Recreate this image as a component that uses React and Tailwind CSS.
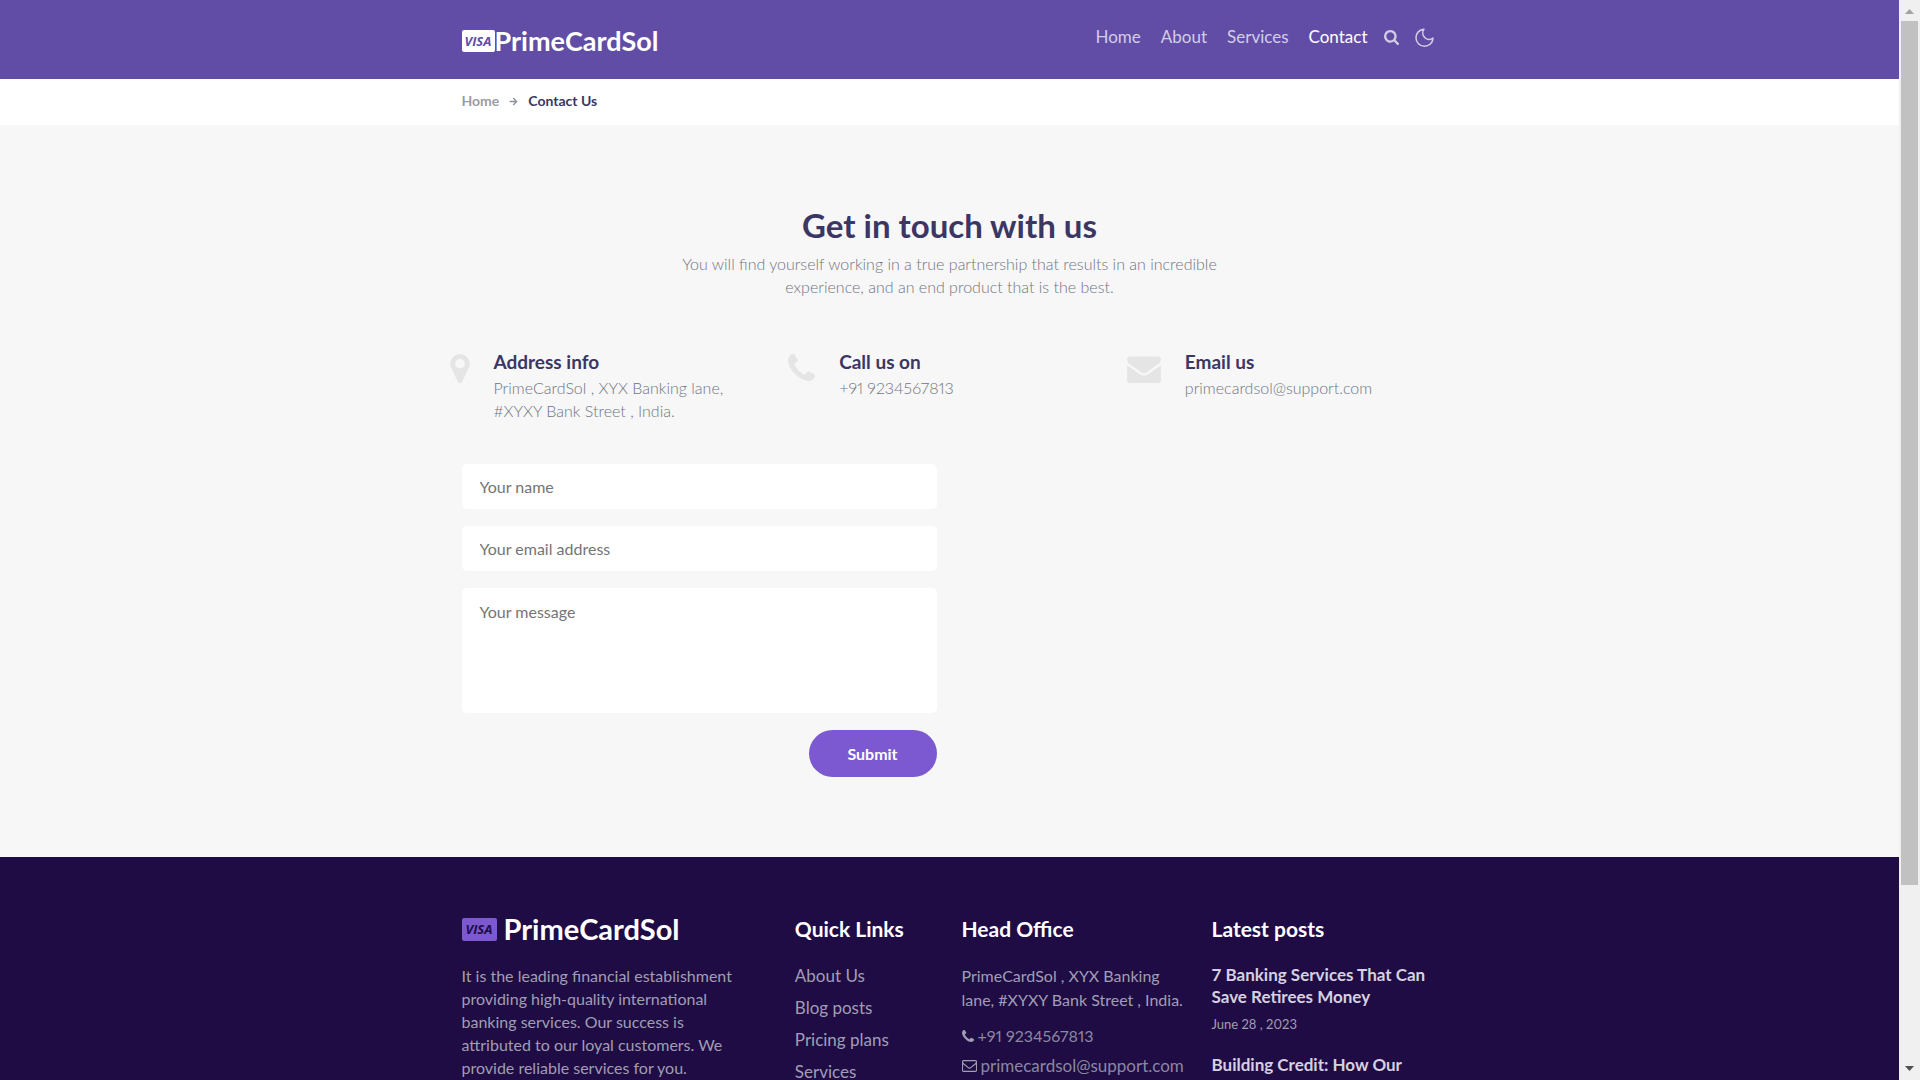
import { FaArrowRight } from "react-icons/fa";

function Glyph({ d, box, className }) {
  return (
    <svg viewBox={box} className={className} fill="currentColor" aria-hidden="true">
      <path d={d} />
    </svg>
  );
}

const PHONE =
  "M1408 1240q0 27-10 70.5t-21 68.5q-21 50-122 106-94 51-186 51-27 0-53-3.5t-57.5-12.5-47-14.5-55.5-20.5-49-18q-98-35-175-83-127-79-264-216t-216-264q-48-77-83-175-3-9-18-49t-20.5-55.5-14.5-47-12.5-57.5-3.5-53q0-92 51-186 56-101 106-122 25-11 68.5-21t70.5-10q14 0 21 3 18 6 53 76 11 19 30 54t35 63.5 31 53.5q3 4 17.5 25t21.5 35.5 7 28.5q0 20-28.5 50t-62 55-62 53-28.5 46q0 9 5 22.5t8.5 20.5 14 24 11.5 19q76 137 174 235t235 174q2 1 19 11.5t24 14 20.5 8.5 22.5 5q18 0 46-28.5t53-62 55-62 50-28.5q14 0 28.5 7t35.5 21.5 25 17.5q25 15 53.5 31t63.5 35 54 30q70 35 76 53 3 7 3 21z";
const PIN =
  "M768 640q0-106-75-181t-181-75-181 75-75 181 75 181 181 75 181-75 75-181zm256 0q0 109-33 179l-364 774q-16 33-47.5 52t-67.5 19-67.5-19-46.5-52l-365-774q-33-70-33-179 0-212 150-362t362-150 362 150 150 362z";
const ENVELOPE =
  "M1792 710v794q0 66-47 113t-113 47h-1472q-66 0-113-47t-47-113v-794q44 49 101 87 362 246 497 345 57 42 92.5 65.5t94.5 48 110 24.5h2q51 0 110-24.5t94.5-48 92.5-65.5q170-123 498-345 57-39 100-87zm0-294q0 79-49 151t-122 123q-376 261-468 325-10 7-42.5 31t-54 38.5-52 32.5-57.5 27-50 9h-2q-23 0-50-9t-57.5-27-52-32.5-54-38.5-42.5-31q-91-64-262-182.5t-205-142.5q-62-42-117-115.5t-55-136.5q0-78 41.5-130t118.5-52h1472q65 0 112.5 47t47.5 113z";
const ENVELOPE_OPEN =
  "M1664 1504v-768q-32 36-69 66-268 206-426 338-51 43-83 67t-86.5 48.5-102.5 24.5h-2q-48 0-102.5-24.5t-86.5-48.5-83-67q-158-132-426-338-37-30-69-66v768q0 13 9.5 22.5t22.5 9.5h1472q13 0 22.5-9.5t9.5-22.5zm0-1051v-24.5l-.5-13-3-12.5-5.5-9-9-7.5-14-2.5h-1472q-13 0-22.5 9.5t-9.5 22.5q0 168 147 284 193 152 401 317 6 5 35 29.5t46 37.5 44.5 31.5 50.5 27.5 43 9h2q20 0 43-9t50.5-27.5 44.5-31.5 46-37.5 35-29.5q208-165 401-317 54-43 100.5-115.5t46.5-131.5zm128-37v1088q0 66-47 113t-113 47h-1472q-66 0-113-47t-47-113v-1088q0-66 47-113t113-47h1472q66 0 113 47t47 113z";
const SEARCH =
  "M1216 832q0-185-131.5-316.5t-316.5-131.5-316.5 131.5-131.5 316.5 131.5 316.5 316.5 131.5 316.5-131.5 131.5-316.5zm512 832q0 52-38 90t-90 38q-54 0-90-38l-343-342q-179 124-399 124-143 0-273.5-55.5t-225-150-150-225-55.5-273.5 55.5-273.5 150-225 225-150 273.5-55.5 273.5 55.5 225 150 150 225 55.5 273.5q0 220-124 399l343 343q37 37 37 90z";

const NAV = ["Home", "About", "Services"];
const LINKS = ["About Us", "Blog posts", "Pricing plans", "Services"];

function VisaBadge({ className }) {
  return (
    <span
      className={
        "flex items-center justify-center rounded-[2px] font-['Open_Sans',sans-serif] text-[13px] leading-none font-bold italic " +
        className
      }
    >
      VISA
    </span>
  );
}

function Header() {
  return (
    <header className="h-[79px] shrink-0 bg-[#624da6]">
      <div className="mx-auto flex max-w-[1000px] items-start justify-between px-3">
        <a href="#home" className="mt-6 flex items-center text-[27px] leading-[34px] font-bold text-white">
          <VisaBadge className="h-[22px] w-[33px] bg-white text-[#624da6]" />
          PrimeCardSol
        </a>
        <nav className="mt-6 flex items-center gap-5 text-[17px] leading-[26px] text-[#d3cde6]">
          {NAV.map((n) => (
            <a key={n} href={"#" + n.toLowerCase()}>{n}</a>
          ))}
          <a href="#contact" className="text-white">Contact</a>
          <button type="button" aria-label="Search" className="-ml-1">
            <Glyph d={SEARCH} box="64 128 1664 1664" className="size-[15px]" />
          </button>
          <button type="button" aria-label="Dark mode" className="mr-1 -ml-1">
            <svg viewBox="2 2 20 20" className="size-[19px]" fill="none" stroke="currentColor" strokeWidth="1.600" strokeLinejoin="round">
              <path d="M11.500 3.200a6.800 6.800 0 0 0 9.500 9.500A9 9 0 1 1 11.500 3.200Z" />
            </svg>
          </button>
        </nav>
      </div>
    </header>
  );
}

function Info({ icon, title, children }) {
  return (
    <div className="flex items-start gap-6">
      <span className="mt-1.5 text-[#e5e5e5]">{icon}</span>
      <div>
        <h2 className="text-[19px] leading-7 font-bold text-[#3b3663]">{title}</h2>
        <p className="text-base leading-[23px] font-light whitespace-nowrap text-[#6f7482] proportional-nums">{children}</p>
      </div>
    </div>
  );
}

function ContactForm() {
  const field = "block w-full rounded-[5px] bg-white px-[18px] text-base placeholder:text-[#757575]";
  return (
    <form className="mt-[42px] flex w-full max-w-[475px] flex-col gap-[17px]">
      <input type="text" aria-label="Your name" placeholder="Your name" className={field + " h-[45px]"} />
      <input type="email" aria-label="Your email address" placeholder="Your email address" className={field + " h-[45px]"} />
      <textarea aria-label="Your message" placeholder="Your message" className={field + " h-[125px] resize-none py-3"} />
      <button type="submit" className="h-[47px] w-32 self-end rounded-full bg-[#7c59d0] text-base font-bold text-white">
        Submit
      </button>
    </form>
  );
}

function Post({ title, date }) {
  return (
    <article>
      <h3 className="text-[17px] leading-[22px] font-bold text-[#d6d0e0]">
        <a href="#post">{title}</a>
      </h3>
      {date && <p className="mt-1.5 text-[13px] leading-5 proportional-nums">{date}</p>}
    </article>
  );
}

function Footer() {
  const heading = "text-[21px] leading-7 font-bold text-white";
  return (
    <footer className="flex-1 bg-[#1f0c44] pt-[58px] text-base text-[#a09eb4]">
      <div className="mx-auto grid max-w-[1000px] grid-cols-12">
        <div className="col-span-4 px-3">
          <a href="#home" className="flex items-center gap-[7px] text-[29px] leading-7 font-bold text-white">
            <VisaBadge className="h-[23px] w-[35px] bg-[#7c59d0] text-[#1f0c44]" />
            PrimeCardSol
          </a>
          <p className="mt-[21px] w-[276px] leading-[23px]">
            It is the leading financial establishment providing high-quality international banking services. Our success is
            attributed to our loyal customers. We provide reliable services for you.
          </p>
        </div>
        <div className="col-span-2 px-3">
          <h2 className={heading + " whitespace-nowrap"}>Quick Links</h2>
          <ul className="mt-[21px] flex flex-col gap-2 text-[17px] leading-6">
            {LINKS.map((l) => (
              <li key={l}><a href="#link">{l}</a></li>
            ))}
          </ul>
        </div>
        <div className="col-span-3 px-3">
          <h2 className={heading}>Head Office</h2>
          <p className="mt-[21px] leading-6 whitespace-nowrap">
            PrimeCardSol , XYX Banking
            <br />
            lane, #XYXY Bank Street , India.
          </p>
          <a href="tel:+919234567813" className="mt-3 flex items-center gap-1 leading-6 text-[#8b87a2] proportional-nums">
            <Glyph d={PHONE} box="0 128 1408 1408" className="size-3 text-[#a09eb4]" />
            +91 9234567813
          </a>
          <a href="mailto:primecardsol@support.com" className="mt-1.5 flex items-center gap-1 text-[17px] leading-6 text-[#8b87a2]">
            <Glyph d={ENVELOPE_OPEN} box="0 256 1792 1408" className="h-3 w-[15px] text-[#a09eb4]" />
            primecardsol@support.com
          </a>
        </div>
        <div className="col-span-3 px-3">
          <h2 className={heading}>Latest posts</h2>
          <div className="mt-[21px] flex flex-col gap-5">
            <Post title="7 Banking Services That Can Save Retirees Money" date="June 28 , 2023" />
            <Post title="Building Credit: How Our" />
          </div>
        </div>
      </div>
    </footer>
  );
}

function ScrollRail() {
  return (
    <div className="flex w-[21px] shrink-0 flex-col items-center bg-[#f0f0f0]" aria-hidden="true">
      <svg viewBox="0 0 21 21" className="size-[21px] text-[#a3a3a3]" fill="currentColor">
        <path d="M6 14 10.500 9 15 14z" />
      </svg>
      <div className="w-[17px] flex-[864] bg-[#c1c1c1]" />
      <div className="flex-[174]" />
      <svg viewBox="0 0 21 21" className="size-[21px] text-[#505050]" fill="currentColor">
        <path d="M6 7 10.500 12 15 7z" />
      </svg>
    </div>
  );
}

export default function App() {
  return (
    <div className="flex h-screen overflow-hidden font-['Lato',sans-serif]">
      <div className="flex min-w-0 flex-1 flex-col">
        <Header />
        <div className="shrink-0 bg-white">
          <div className="mx-auto flex h-[46px] max-w-[1000px] items-center gap-2.5 px-3 pb-0.5 text-sm font-bold text-[#3b3663]">
            <a href="#home" className="text-[#999ca7]">Home</a>
            <FaArrowRight className="size-[9px] text-[#8a8f9c]" />
            <span>Contact Us</span>
          </div>
        </div>
        <main className="shrink-0 bg-[#f7f7f7] pt-20 pb-20">
          <div className="mx-auto max-w-[1000px] px-3">
            <div className="mx-auto max-w-[600px] text-center">
              <h1 className="text-[33px] leading-10 font-bold text-[#3b3663]">Get in touch with us</h1>
              <p className="mt-[7px] text-base leading-[23px] font-light text-[#6f7482]">
                You will find yourself working in a true partnership that results in an incredible
                <br />
                experience, and an end product that is the best.
              </p>
            </div>
            <div className="mt-[50px] -mr-7 -ml-3 grid grid-cols-3">
              <Info title="Address info" icon={<Glyph d={PIN} box="0 128 1024 1536" className="h-[29px] w-5" />}>
                PrimeCardSol , XYX Banking lane,
                <br />
                #XYXY Bank Street , India.
              </Info>
              <Info title="Call us on" icon={<Glyph d={PHONE} box="0 128 1408 1408" className="size-[27px]" />}>
                +91 9234567813
              </Info>
              <Info title="Email us" icon={<Glyph d={ENVELOPE} box="0 128 1792 1536" className="h-[29px] w-[34px]" />}>
                primecardsol@support.com
              </Info>
            </div>
            <ContactForm />
          </div>
        </main>
        <Footer />
      </div>
      <ScrollRail />
    </div>
  );
}
